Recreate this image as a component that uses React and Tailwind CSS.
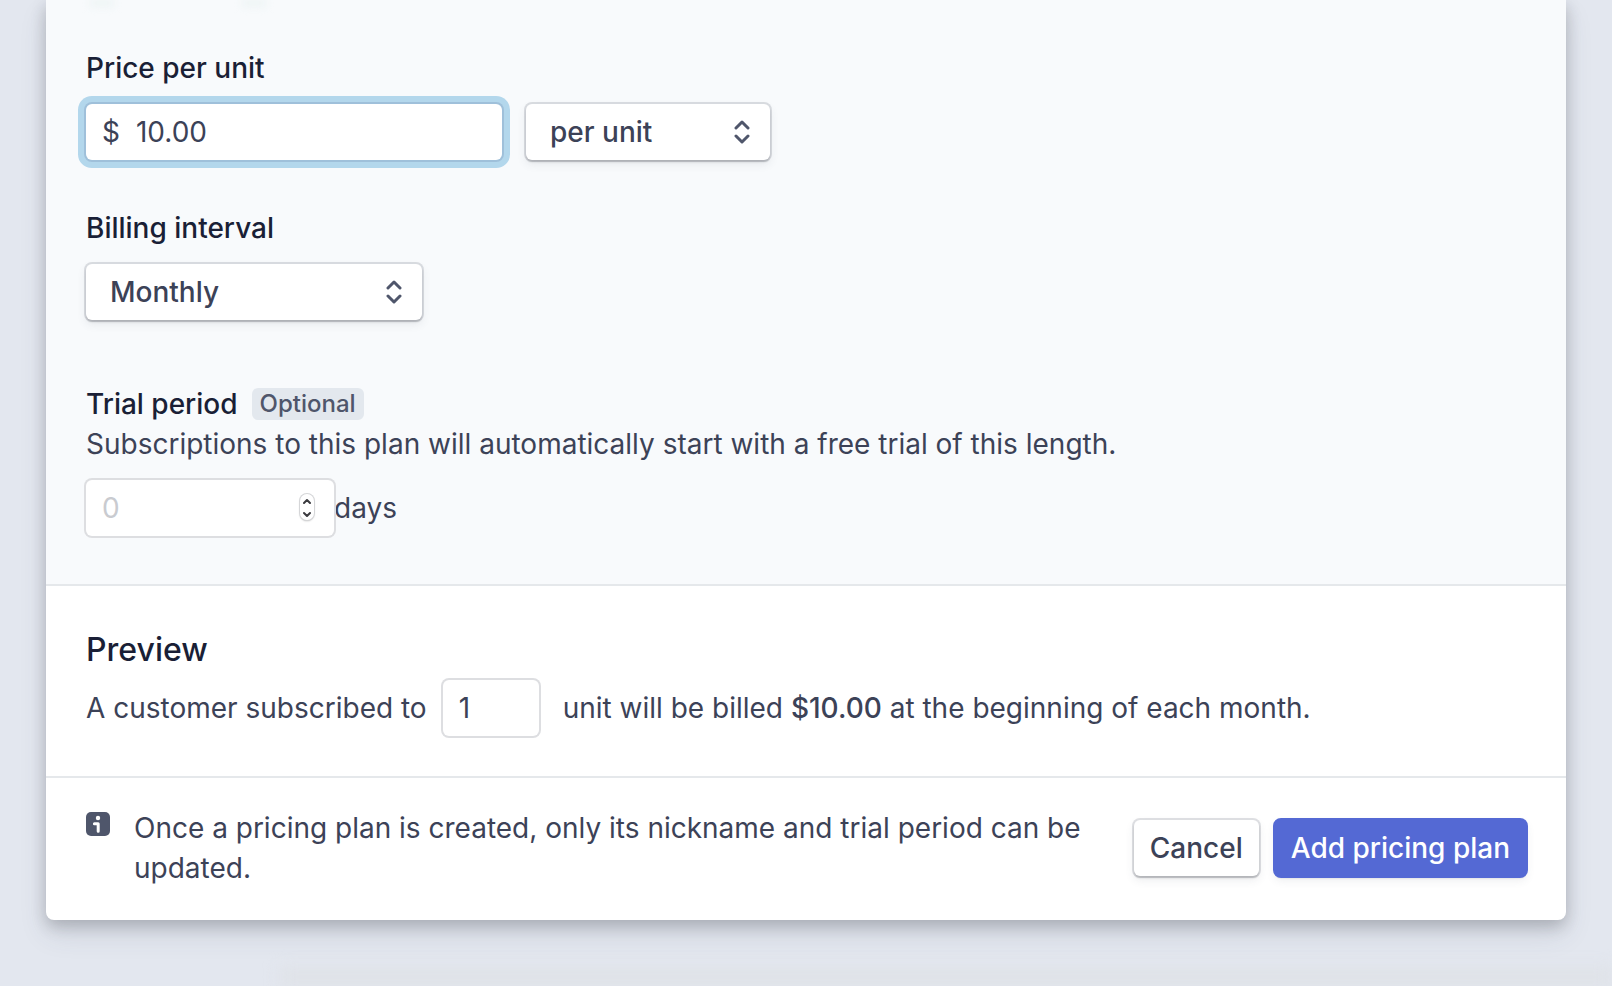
import React, { useState } from 'react'

// soft ring instead of a border, so the 56px controls keep their size
const fieldClass =
  'h-14 rounded-md bg-white text-[#3c4257] outline-none shadow-[0_0_0_2px_#dddee1]'
const raisedClass =
  'h-14 rounded-md bg-white text-[#3c4257] shadow-[0_0_0_2px_rgba(60,66,87,0.16),0_2px_2px_rgba(0,0,0,0.16),0_4px_10px_rgba(60,66,87,0.1)]'

const SelectArrows = () => (
  <svg className="pointer-events-none absolute top-4 right-5 h-6 w-4" viewBox="0 0 16 24" fill="none" stroke="#4f566b" strokeWidth="3" strokeLinecap="round" strokeLinejoin="round" aria-hidden="true">
    <path d="M2 8l6-6 6 6" />
    <path d="M2 16l6 6 6-6" />
  </svg>
)

const InfoIcon = () => (
  <svg className="mt-1 h-6 w-6 shrink-0" viewBox="0 0 24 24" aria-hidden="true">
    <rect width="24" height="24" rx="5" fill="#4f566b" />
    <circle cx="12" cy="6" r="2.2" fill="#fff" />
    <path d="M8.4 11.8h3.8v7.4" fill="none" stroke="#fff" strokeWidth="3" strokeLinecap="round" strokeLinejoin="round" />
  </svg>
)

const App = () => {
  const [price, setPrice] = useState('10.00')
  const [unit, setUnit] = useState('per unit')
  const [interval, setInterval] = useState('Monthly')
  const [trialDays, setTrialDays] = useState('')
  const [quantity, setQuantity] = useState('1')

  const stepTrial = (amount) => {
    setTrialDays(prev => String(Math.max(0, (parseInt(prev) || 0) + amount)))
  }

  return (
    <div className="min-h-screen overflow-hidden bg-[#e3e7ef] font-['Inter',sans-serif] text-[28px] leading-10 text-[#3c4257]">
      <form
        onSubmit={(e) => e.preventDefault()}
        className="mx-[46px] overflow-hidden rounded-b-lg bg-white shadow-[0_14px_28px_rgba(60,66,87,0.12),0_6px_16px_rgba(0,0,0,0.2)]"
      >
        {/* Pricing fields */}
        <div className="border-b-2 border-[#e5e8eb] bg-[#f8fafc] px-10 pb-12">
          <div className="flex h-12 gap-32 px-1">
            <div className="h-1.5 w-6 bg-[#eaf3f2] blur-xs" />
            <div className="h-1.5 w-6 bg-[#eaf3f2] blur-xs" />
          </div>
          <label htmlFor="price" className="block font-medium text-[#1a1f36]">Price per unit</label>
          <div className="mt-4 flex gap-6">
            <div className="flex h-14 w-[416px] items-center gap-4 rounded-md bg-white px-4 shadow-[0_0_0_2px_#9fc0da,0_0_0_8px_#b3d7ec]">
              <span>$</span>
              <input
                id="price"
                type="text"
                value={price}
                onChange={(e) => setPrice(e.target.value)}
                className="w-full min-w-0 bg-transparent outline-none"
              />
            </div>
            <div className="relative w-[244px]">
              <select
                aria-label="Pricing model"
                value={unit}
                onChange={(e) => setUnit(e.target.value)}
                className={`${raisedClass} w-full appearance-none px-6 font-medium`}
              >
                <option>per unit</option>
                <option>per package</option>
              </select>
              <SelectArrows />
            </div>
          </div>

          <label htmlFor="interval" className="mt-12 block font-medium text-[#1a1f36]">Billing interval</label>
          <div className="relative mt-4 w-[336px]">
            <select
              id="interval"
              value={interval}
              onChange={(e) => setInterval(e.target.value)}
              className={`${raisedClass} w-full appearance-none px-6 font-medium`}
            >
              <option>Monthly</option>
              <option>Yearly</option>
            </select>
            <SelectArrows />
          </div>

          <div className="mt-16 flex items-center gap-3.5">
            <label htmlFor="trial" className="font-medium text-[#1a1f36]">Trial period</label>
            <span className="rounded-md bg-[#e3e8ee] px-2 text-2xl leading-8 font-medium text-[#4f566b]">Optional</span>
          </div>
          <p>Subscriptions to this plan will automatically start with a free trial of this length.</p>
          <div className="mt-4 flex items-center">
            <div className="relative">
              <input
                id="trial"
                type="text"
                inputMode="numeric"
                placeholder="0"
                value={trialDays}
                onChange={(e) => setTrialDays(e.target.value)}
                className={`${fieldClass} block w-[248px] px-4 placeholder:text-[#c9cbd0]`}
              />
              <div className="absolute top-3.5 right-5 flex h-[26px] w-3.5 flex-col overflow-hidden rounded-full bg-white shadow-[0_0_0_1px_#d5d6d8,0_1px_2px_rgba(0,0,0,0.3)]">
                <button type="button" aria-label="Increase trial days" onClick={() => stepTrial(1)} className="flex h-1/2 items-center justify-center">
                  <svg className="h-2 w-2" viewBox="0 0 8 8" fill="none" stroke="#3b3b3f" strokeWidth="2" strokeLinecap="round" strokeLinejoin="round"><path d="M1 6l3-3 3 3" /></svg>
                </button>
                <button type="button" aria-label="Decrease trial days" onClick={() => stepTrial(-1)} className="flex h-1/2 items-center justify-center">
                  <svg className="h-2 w-2" viewBox="0 0 8 8" fill="none" stroke="#3b3b3f" strokeWidth="2" strokeLinecap="round" strokeLinejoin="round"><path d="M1 3l3 3 3-3" /></svg>
                </button>
              </div>
            </div>
            <span>days</span>
          </div>
        </div>

        {/* Preview */}
        <div className="border-b-2 border-[#e5e8eb] px-10 pt-10 pb-10">
          <h2 className="text-[32px] leading-12 font-medium text-[#1a1f36]">Preview</h2>
          <div className="mt-1.5 flex items-center">
            <label htmlFor="quantity">A customer subscribed to</label>
            <input
              id="quantity"
              type="text"
              value={quantity}
              onChange={(e) => setQuantity(e.target.value)}
              className={`${fieldClass} mr-6 ml-4 w-24 px-4`}
            />
            <p>unit will be billed <span className="font-medium">${price}</span> at the beginning of each month.</p>
          </div>
        </div>

        {/* Footer */}
        <div className="flex items-center gap-12 px-10 pt-[30px] pb-8">
          <div className="flex flex-1 gap-6">
            <InfoIcon />
            <p>Once a pricing plan is created, only its nickname and trial period can be updated.</p>
          </div>
          <div className="flex gap-4">
            <button type="button" className={`${raisedClass} px-4 font-medium`}>Cancel</button>
            <button
              type="submit"
              className="h-14 rounded-md bg-[#5469d4] px-4 font-medium text-white shadow-[0_0_0_2px_#5469d4,0_2px_2px_rgba(0,0,0,0.16),0_4px_10px_rgba(60,66,87,0.1)]"
            >
              Add pricing plan
            </button>
          </div>
        </div>
      </form>

      {/* faint shade along the bottom edge */}
      <div className="mt-12 ml-[280px] h-[18px] bg-[#dfe2e7] blur-sm" />
    </div>
  )
}

export default App
